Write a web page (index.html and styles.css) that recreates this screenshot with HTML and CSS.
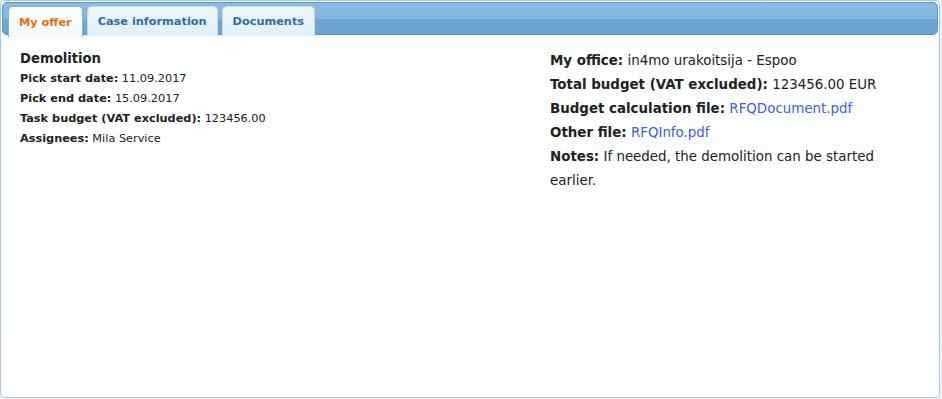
FILE: index.html
```html
<!DOCTYPE html>
<html lang="en">

<head>
    <meta charset="UTF-8">
    <meta name="viewport" content="width=device-width, initial-scale=1.0">
    <title>My offer</title>
    <link rel="stylesheet" href="styles.css">
</head>

<body>

    <div class="tabs">
        <ul class="tab-nav">
            <li class="tab active">My offer</li>
            <li class="tab">Case information</li>
            <li class="tab">Documents</li>
        </ul>

        <div class="tab-panel">
            <div class="col col-left">
                <h4>Demolition</h4>
                <div><b>Pick start date:</b> 11.09.2017</div>
                <div><b>Pick end date:</b> 15.09.2017</div>
                <div><b>Task budget (VAT excluded):</b> 123456.00</div>
                <div><b>Assignees:</b> Mila Service</div>
            </div>
            <div class="col col-right">
                <div><b>My office:</b> in4mo urakoitsija - Espoo</div>
                <div><b>Total budget (VAT excluded):</b> 123456.00 EUR</div>
                <div><b>Budget calculation file:</b> <a href="#">RFQDocument.pdf</a></div>
                <div><b>Other file:</b> <a href="#">RFQInfo.pdf</a></div>
                <div><b>Notes:</b> If needed, the demolition can be started earlier.</div>
            </div>
        </div>
    </div>

</body>

</html>
```

FILE: styles.css
```css
body {
    background-color: #eef2f7;
    font-family: "DejaVu Sans", Verdana, sans-serif;
    color: #222;
    margin: 0;
    padding: 0;
}

.tabs {
    width: 936px;
    height: 394px;
    padding: 1px;
    background: linear-gradient(#fcfdfd 70%, #ffffff);
    border: 1px solid #a6c9e2;
    border-radius: 5px;
    box-sizing: content-box;
}

.tab-nav {
    display: flex;
    gap: 4px;
    height: 28px;
    margin: 0;
    padding: 3px 0 0 5px;
    list-style: none;
    border: 1px solid #4d95d3;
    border-radius: 5px;
    background: linear-gradient(#8ebbe0 0%, #86b5dc 50%, #6ea7d5 52%, #6aa4d3 100%);
}

.tab {
    height: 29px;
    padding: 0 10px;
    margin-bottom: -1px;
    display: flex;
    align-items: center;
    font-size: 11.3px;
    font-weight: bold;
    color: #2e6e9e;
    background: linear-gradient(#f0f7fd, #dfeffc);
    border: 1px solid #c5dbec;
    border-bottom: 0;
    border-radius: 5px 5px 0 0;
}

.tab.active {
    color: #e17009;
    background: linear-gradient(#fbfcfd, #f5f8f9);
    border-color: #79b7e7;
    height: 30px;
}

.tab-panel {
    display: flex;
    padding: 14px 18px 12px;
}

.col-left {
    width: 530px;
    font-size: 11.3px;
    line-height: 20px;
}

.col-left h4 {
    margin: 0;
    font-size: 13.2px;
    line-height: 20px;
}

.col-right {
    flex: 1;
    margin-top: 0;
    font-size: 13.4px;
    line-height: 24px;
    padding-right: 10px;
}

b {
    color: #222;
}

a {
    color: #3b5fe6;
    text-decoration: none;
}
```
